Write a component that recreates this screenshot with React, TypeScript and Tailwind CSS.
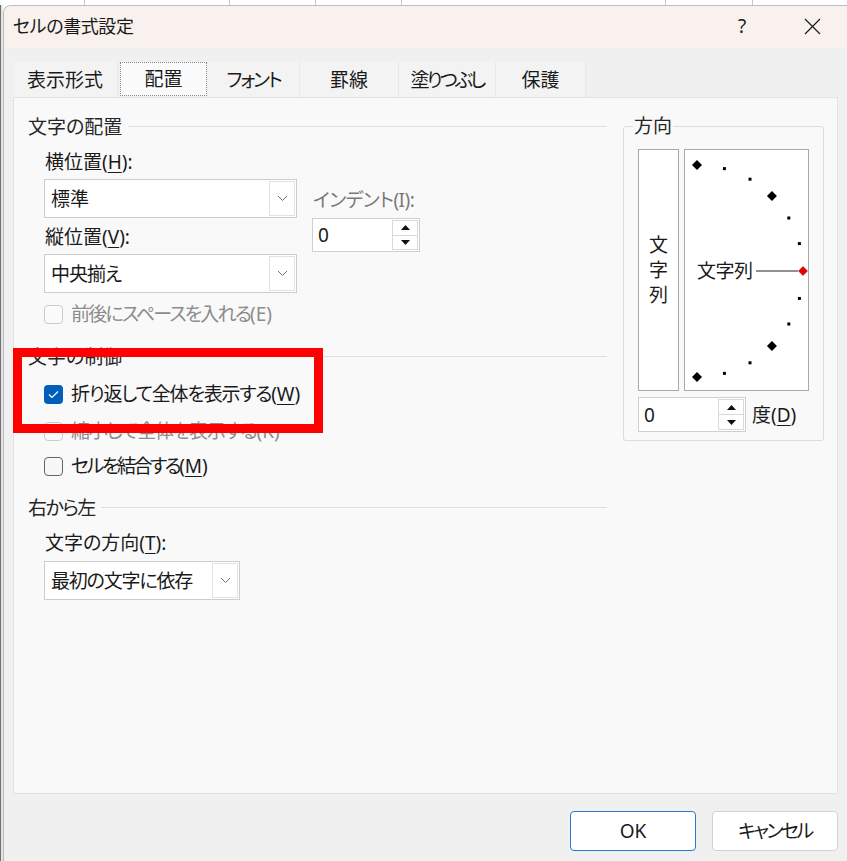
import React from 'react'

type CheckState = 'checked' | 'off' | 'disabled'

const TABS = [
  { label: '表示形式', w: 'w-[105px]', track: '' },
  { label: '配置', w: 'w-[87px]', track: '', active: true },
  { label: 'フォント', w: 'w-[92px]', track: 'tracking-[-2px]' },
  { label: '罫線', w: 'w-[99px]', track: '' },
  { label: '塗りつぶし', w: 'w-[97px]', track: 'tracking-[-2.8px]' },
  { label: '保護', w: 'w-[90px]', track: '' },
]

function Chevron() {
  return (
    <svg width="11" height="7" viewBox="0 0 11 7">
      <polyline points="1,1 5.5,5.5 10,1" fill="none" stroke="#6b6b6b" strokeWidth="1" />
    </svg>
  )
}

function Select({ value, className, track = '' }: { value: string; className: string; track?: string }) {
  return (
    <div className={`flex h-[39px] items-stretch border border-[#cdcdcd] bg-white ${className}`}>
      <span className={`flex-1 self-center pl-[6px] leading-[24px] text-[#1a1a1a] ${track}`}>{value}</span>
      <div className="my-px mr-px flex w-[26px] items-center justify-center border border-[#e2e2e2] bg-white">
        <Chevron />
      </div>
    </div>
  )
}

function Spinner({ value, className }: { value: string; className: string }) {
  return (
    <div className={`flex items-stretch border border-[#cfcfcf] bg-white ${className}`}>
      <span className="flex-1 self-center pl-[5px] leading-[24px] text-[#1a1a1a]">{value}</span>
      <div className="my-px mr-px flex w-[26px] flex-col border border-[#d9d9d9]">
        <div className="flex flex-1 items-center justify-center border-b border-[#d9d9d9]">
          <svg width="9" height="5" viewBox="0 0 9 5">
            <polygon points="0,5 4.5,0 9,5" fill="#111" />
          </svg>
        </div>
        <div className="flex flex-1 items-center justify-center">
          <svg width="9" height="5" viewBox="0 0 9 5">
            <polygon points="0,0 9,0 4.5,5" fill="#111" />
          </svg>
        </div>
      </div>
    </div>
  )
}

function CheckBox({ state }: { state: CheckState }) {
  if (state === 'checked') {
    return (
      <div className="flex h-[19px] w-[19px] items-center justify-center rounded-[4px] bg-[#005fb8]">
        <svg width="11" height="9" viewBox="0 0 11 9">
          <polyline points="1,4.5 4,7.5 10,1.5" fill="none" stroke="#fff" strokeWidth="1.2" />
        </svg>
      </div>
    )
  }
  const border = state === 'disabled' ? 'border-[#cbcbcb] bg-[#fbfbfb]' : 'border-[#646464] bg-[#f7f7f7]'
  return <div className={`h-[19px] w-[19px] shrink-0 rounded-[4px] border ${border}`} />
}

function Key({ k }: { k: string }) {
  return (
    <>
      (<u className="underline-offset-[3px]">{k}</u>)
    </>
  )
}

function CheckRow({
  state,
  label,
  k,
  className,
  track,
}: {
  state: CheckState
  label: string
  k: string
  className: string
  track: string
}) {
  const disabled = state === 'disabled'
  return (
    <div className={`ml-[16px] flex h-[24px] items-center gap-[8px] ${className}`}>
      <CheckBox state={state} />
      <span className={`whitespace-nowrap leading-[24px] ${disabled ? 'text-[#8c8c8c]' : 'text-[#1a1a1a]'}`}>
        <span className={track}>{label}</span>
        {disabled ? `(${k})` : <Key k={k} />}
      </span>
    </div>
  )
}

function GroupHeader({ title, className, track = '' }: { title: string; className: string; track?: string }) {
  return (
    <div className={`flex h-[24px] items-center ${className}`}>
      <span className={`leading-[24px] text-[#262626] ${track}`}>{title}</span>
      <div className="-mt-[2px] ml-[6px] h-px flex-1 bg-[#dfdfdf]" />
    </div>
  )
}

// half circle of orientation marks, 15° apart, centred on the left edge
function OrientationDial() {
  const cx = 12
  const cy = 121
  const r = 106
  const marks = []
  for (let a = 90; a >= -90; a -= 15) {
    const rad = (a * Math.PI) / 180
    const x = cx + r * Math.cos(rad)
    const y = cy - r * Math.sin(rad)
    if (a === 0) {
      marks.push(
        <polygon key={a} points={`${x},${y - 4.5} ${x + 4.5},${y} ${x},${y + 4.5} ${x - 4.5},${y}`} fill="#e60000" stroke="#a00000" strokeWidth="0.5" />,
      )
    } else if (a % 45 === 0) {
      marks.push(<polygon key={a} points={`${x},${y - 5} ${x + 5},${y} ${x},${y + 5} ${x - 5},${y}`} fill="#000" />)
    } else {
      marks.push(<rect key={a} x={x - 1.5} y={y - 1.5} width="3" height="3" fill="#000" />)
    }
  }
  return (
    <div className="relative ml-[5px] h-[242px] w-[125px] border border-[#a9a9a9] bg-white">
      <svg className="absolute inset-0" width="123" height="240" viewBox="0 0 123 240">
        <line x1="71" y1={cy} x2="113" y2={cy} stroke="#222" strokeWidth="1" />
        {marks}
      </svg>
      <span className="absolute left-[12px] top-[109px] leading-[24px] tracking-[-0.5px] text-[#1a1a1a]">文字列</span>
    </div>
  )
}

export default function App() {
  return (
    <div className="flex h-[861px] w-[847px] flex-col overflow-hidden bg-white font-['Noto_Sans','Noto_Sans_CJK_JP',sans-serif] text-[19px] [font-feature-settings:'palt']">
      {/* spreadsheet grid peeking out behind the dialog */}
      <div className="flex h-[5px] shrink-0 bg-white">
        <div className="w-[85px] border-r border-[#c6c6c6]" />
        <div className="w-[145px] border-r border-[#c6c6c6]" />
        <div className="w-[86px] border-r border-[#c6c6c6]" />
        <div className="w-[86px] border-r border-[#c6c6c6]" />
        <div className="w-[264px] border-r border-[#c6c6c6]" />
        <div className="w-[87px] border-r border-[#c6c6c6]" />
        <div className="flex-1" />
      </div>

      <div className="flex flex-1">
        <div className="w-[3px] border-l border-[#6f6f6f] bg-[#e4e4e4]" />

        {/* dialog window */}
        <div className="flex flex-1 flex-col overflow-hidden rounded-tl-[8px] border-l border-t border-[#bcbcbc] bg-[#f0f0f0]">
          <div className="flex h-[42px] shrink-0 items-center bg-[#f9f1ed] pb-[2px] pl-[9px]">
            <span className="text-[18px] leading-[24px] tracking-[-0.4px] text-[#1a1a1a]">セルの書式設定</span>
            <div className="ml-auto flex">
              <div className="flex w-[70px] justify-center text-[19px] leading-[24px] text-[#1a1a1a]">?</div>
              <div className="flex w-[70px] items-center justify-center">
                <svg width="17" height="17" viewBox="0 0 17 17">
                  <path d="M1 1 L16 16 M16 1 L1 16" stroke="#1a1a1a" strokeWidth="1.2" />
                </svg>
              </div>
            </div>
          </div>

          <div className="flex flex-1 flex-col px-[9px] pt-[14px]">
            {/* tabs */}
            <div className="flex h-[35px]">
              {TABS.map(t =>
                t.active ? (
                  <div
                    key={t.label}
                    className={`${t.w} ml-[2px] mr-px flex h-[34px] items-center justify-center border border-dotted border-[#8a8a8a] bg-[#fbfbfb] leading-[24px] text-[#1a1a1a]`}
                  >
                    {t.label}
                  </div>
                ) : (
                  <div
                    key={t.label}
                    className={`${t.w} ${t.track} flex items-center justify-center border-r border-[#e8e8e8] bg-[#f3f3f3] leading-[24px] text-[#1a1a1a]`}
                  >
                    {t.label}
                  </div>
                ),
              )}
            </div>

            {/* tab page */}
            <div className="flex h-[697px] items-start border border-[#e2e2e2] bg-[#f9f9f9]">
              <div className="flex w-[593px] flex-col pl-[14px] pt-[17px]">
                <GroupHeader title="文字の配置" className="" />
                <div className="mt-[11px] h-[24px] pl-[17px] leading-[24px] text-[#1a1a1a]">
                  横位置<Key k="H" />:
                </div>
                <div className="ml-[16px] mt-[5px] flex items-start">
                  <div className="flex w-[253px] flex-col">
                    <Select value="標準" className="w-[253px]" />
                    <div className="mt-[7px] h-[24px] pl-px leading-[24px] text-[#1a1a1a]">
                      縦位置<Key k="V" />:
                    </div>
                    <Select value="中央揃え" className="mt-[5px] w-[253px]" track="tracking-[-1px]" />
                  </div>
                  <div className="ml-[15px] flex flex-col">
                    <div className="mt-[9px] h-[24px] pl-px leading-[24px] tracking-[-0.5px] text-[#7a7a7a]">インデント(I):</div>
                    <Spinner value="0" className="mt-[6px] h-[34px] w-[108px]" />
                  </div>
                </div>
                <CheckRow state="disabled" label="前後にスペースを入れる" k="E" className="mt-[9px]" track="tracking-[-1.8px]" />

                <GroupHeader title="文字の制御" className="mt-[19px]" />
                <CheckRow state="checked" label="折り返して全体を表示する" k="W" className="mt-[13px]" track="tracking-[-1.2px]" />
                <CheckRow state="disabled" label="縮小して全体を表示する" k="K" className="mt-[13px]" track="tracking-[-1.2px]" />
                <CheckRow state="off" label="セルを結合する" k="M" className="mt-[11px]" track="tracking-[-2.5px]" />

                <GroupHeader title="右から左" className="mt-[18px]" track="tracking-[-1.5px]" />
                <div className="mt-[11px] h-[24px] pl-[17px] leading-[24px] text-[#1a1a1a]">
                  文字の方向<Key k="T" />:
                </div>
                <Select value="最初の文字に依存" className="ml-[16px] mt-[6px] w-[196px]" track="tracking-[-1.2px]" />
              </div>

              {/* orientation group */}
              <div className="relative ml-[16px] mt-[28px] w-[201px] rounded-[3px] border border-[#dcdcdc] pb-[8px] pl-[14px] pt-[22px]">
                <span className="absolute -top-[13px] left-[9px] bg-[#f9f9f9] px-px leading-[24px] text-[#262626]">方向</span>
                <div className="flex">
                  <div className="flex h-[242px] w-[41px] flex-col items-center justify-center border border-[#a9a9a9] bg-white leading-[25px] text-[#1a1a1a]">
                    <span>文</span>
                    <span>字</span>
                    <span>列</span>
                  </div>
                  <OrientationDial />
                </div>
                <div className="mt-[6px] flex items-center">
                  <Spinner value="0" className="h-[35px] w-[108px]" />
                  <span className="ml-[6px] leading-[24px] text-[#1a1a1a]">
                    度<Key k="D" />
                  </span>
                </div>
              </div>
            </div>

            <div className="mt-[17px] flex justify-end gap-[16px]">
              <button className="flex h-[40px] w-[126px] items-center justify-center rounded-[4px] border border-[#2a78cc] bg-white leading-[24px] text-[#1a1a1a]">
                OK
              </button>
              <button className="flex h-[40px] w-[126px] items-center justify-center rounded-[4px] border border-[#d2d2d2] bg-white leading-[24px] tracking-[-2.5px] text-[#1a1a1a]">
                キャンセル
              </button>
            </div>
          </div>
        </div>
      </div>

      {/* red highlight drawn over the wrap-text option */}
      <div className="pointer-events-none fixed left-[13px] top-[348px] h-[85px] w-[310px] border-[9px] border-[#ff0000]" />
    </div>
  )
}
